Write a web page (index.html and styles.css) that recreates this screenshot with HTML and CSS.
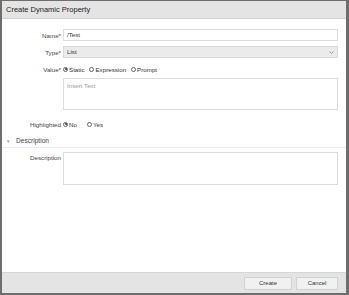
FILE: index.html
```html
<!DOCTYPE html>
<html>
<head>
<meta charset="utf-8">
<link rel="stylesheet" href="styles.css">
</head>
<body>
<div class="dialog">
  <div class="header">Create Dynamic Property</div>
  <div class="content">
    <div class="row r-name">
      <div class="label">Name*</div>
      <div class="input">/Test</div>
    </div>
    <div class="row r-type">
      <div class="label">Type*</div>
      <div class="input select"><span>List</span>
        <svg class="chev" width="5" height="3" viewBox="0 0 5 3"><path d="M0.5 0.5 L2.5 2.5 L4.5 0.5" fill="none" stroke="#888" stroke-width="0.8"/></svg>
      </div>
    </div>
    <div class="row r-value">
      <div class="label">Value*</div>
      <div class="radios">
        <span class="radio checked"></span><span class="rtext">Static</span>
        <span class="radio"></span><span class="rtext">Expression</span>
        <span class="radio"></span><span class="rtext">Prompt</span>
      </div>
    </div>
    <div class="row r-area">
      <div class="label"></div>
      <div class="textarea placeholder">Insert Text</div>
    </div>
    <div class="row r-high">
      <div class="label">Highlighted</div>
      <div class="radios">
        <span class="radio checked"></span><span class="rtext wide">No</span>
        <span class="radio"></span><span class="rtext">Yes</span>
      </div>
    </div>
    <div class="section"><span class="arrow">▾</span><span>Description</span></div>
    <div class="row r-desc">
      <div class="label top">Description</div>
      <div class="textarea desc"></div>
    </div>
  </div>
  <div class="footer">
    <div class="btn create">Create</div>
    <div class="btn cancel">Cancel</div>
  </div>
</div>
</body>
</html>
```
FILE: styles.css
```css
* { box-sizing: border-box; }
html, body { margin: 0; padding: 0; }
body {
  font-family: "Liberation Sans", Arial, sans-serif;
  background: #fff;
}
.dialog {
  height: 295px;
  width: 349px;
  border-top: 1px solid #6e6e6e;
  border-left: 2px solid #6e6e6e;
  border-right: 3px solid #6e6e6e;
  border-bottom: 2px solid #6e6e6e;
  display: flex;
  flex-direction: column;
  background: #fff;
}
.header {
  height: 18px;
  background: #e4e4e4;
  border-bottom: 1px solid #d2d2d2;
  font-size: 7.5px;
  color: #222;
  padding-left: 4px;
  line-height: 17px;
}
.content {
  flex: 1;
  display: flex;
  flex-direction: column;
  padding-right: 8px;
}
.row {
  display: grid;
  grid-template-columns: 59px 1fr;
  column-gap: 2px;
  align-items: center;
}
.label {
  text-align: right;
  font-size: 6.2px;
  color: #444;
}
.label.top { align-self: start; padding-top: 2px; }
.input {
  height: 12px;
  border: 1px solid #dcdcdc;
  font-size: 6.2px;
  color: #333;
  padding-left: 3px;
  line-height: 10px;
  background: #fff;
}
.select {
  background: #ebebeb;
  border-color: #dadada;
  display: flex;
  align-items: center;
  justify-content: space-between;
  padding-right: 3px;
}
.r-name { margin-top: 10px; }
.r-type { margin-top: 5px; }
.r-value { margin-top: 5px; height: 12px; }
.r-area { margin-top: 3px; }
.r-high { margin-top: 8px; height: 12px; }
.r-desc { margin-top: 4px; }
.radios {
  display: flex;
  align-items: center;
  font-size: 6.2px;
  color: #333;
}
.radio {
  width: 5px;
  height: 5px;
  border: 0.7px solid #666;
  border-radius: 50%;
  margin-right: 1px;
  position: relative;
  background: #fff;
}
.radio.checked::after {
  content: "";
  position: absolute;
  left: 0.8px; top: 0.8px;
  width: 2px; height: 2px;
  border-radius: 50%;
  background: #333;
}
.rtext { margin-right: 5px; }
.rtext.wide { margin-right: 10px; }
.textarea {
  height: 32px;
  border: 1px solid #dcdcdc;
  font-size: 6.2px;
  padding: 3px;
  background: #fff;
}
.textarea.desc { height: 33px; }
.placeholder { color: #999; }
.section {
  margin-top: 4px;
  height: 14px;
  border-bottom: 1px solid #efefef;
  display: flex;
  align-items: center;
  font-size: 6.6px;
  color: #444;
  margin-right: -8px;
}
.arrow {
  font-size: 5px;
  color: #999;
  margin-left: 5px;
  width: 9px;
}
.footer {
  height: 21px;
  background: #e4e4e4;
  border-top: 1px solid #d6d6d6;
  display: flex;
  justify-content: flex-end;
  align-items: center;
  padding-right: 8px;
  gap: 4px;
}
.btn {
  height: 13px;
  border: 1px solid #d2d2d2;
  background: #f1f1f1;
  font-size: 6px;
  color: #333;
  display: flex;
  align-items: center;
  justify-content: center;
}
.create { width: 48px; }
.cancel { width: 42px; }
```
